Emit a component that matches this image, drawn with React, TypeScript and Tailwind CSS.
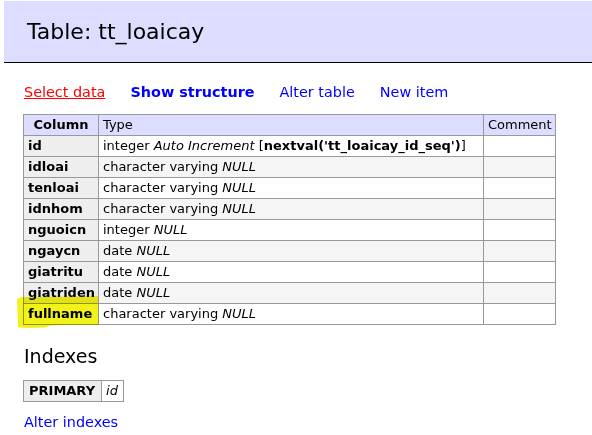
import React from "react";

type Row = { name: string; type: React.ReactNode };

const rows: Row[] = [
  {
    name: "id",
    type: (
      <>
        integer <i>Auto Increment</i> [<b>nextval('tt_loaicay_id_seq')</b>]
      </>
    ),
  },
  { name: "idloai", type: <>character varying <i>NULL</i></> },
  { name: "tenloai", type: <>character varying <i>NULL</i></> },
  { name: "idnhom", type: <>character varying <i>NULL</i></> },
  { name: "nguoicn", type: <>integer <i>NULL</i></> },
  { name: "ngaycn", type: <>date <i>NULL</i></> },
  { name: "giatritu", type: <>date <i>NULL</i></> },
  { name: "giatriden", type: <>date <i>NULL</i></> },
  { name: "fullname", type: <>character varying <i>NULL</i></> },
];

export default function App() {
  return (
    <div className="relative w-[592px] h-[435px] overflow-hidden bg-white text-black font-['DejaVu_Sans',Verdana,sans-serif] text-[13px] leading-[16px]">
      <h2 className="ml-[4px] mt-[1px] h-[62px] border-b border-black bg-[#ddf] pl-[23px] pt-[18px] text-[22px] leading-[26px] font-normal">
        Table: tt_loaicay
      </h2>

      <div className="ml-[24px] mt-[20px] flex gap-[25px] text-[14.4px] leading-[18px]">
        <a className="text-[#f00] underline cursor-pointer">Select data</a>
        <a className="text-[#00f] font-bold cursor-pointer">Show structure</a>
        <a className="text-[#00f] cursor-pointer">Alter table</a>
        <a className="text-[#00f] cursor-pointer">New item</a>
      </div>

      <table className="ml-[23px] mt-[13px] w-[532px] table-fixed border-collapse border border-[#999]">
        <colgroup>
          <col className="w-[75px]" />
          <col className="w-[385px]" />
          <col className="w-[72px]" />
        </colgroup>
        <thead>
          <tr className="bg-[#ddf]">
            <th className="border border-[#999] px-[4px] py-[2px] text-center font-bold">Column</th>
            <td className="border border-[#999] px-[4px] py-[2px] text-left">Type</td>
            <td className="border border-[#999] px-[4px] py-[2px] text-left">Comment</td>
          </tr>
        </thead>
        <tbody>
          {rows.map((r, i) => (
            <tr key={r.name}>
              <th
                className={`border border-[#999] px-[4px] py-[2px] text-left font-bold whitespace-nowrap ${
                  r.name === "fullname" ? "bg-white" : "bg-[#eee]"
                }`}
              >
                {r.name}
              </th>
              <td className={`border border-[#999] px-[4px] py-[2px] whitespace-nowrap ${i % 2 === 1 ? "bg-[#f5f5f5]" : "bg-white"}`}>
                {r.type}
              </td>
              <td className={`border border-[#999] px-[4px] py-[2px] ${i % 2 === 1 ? "bg-[#f5f5f5]" : "bg-white"}`}></td>
            </tr>
          ))}
        </tbody>
      </table>

      <h3 className="ml-[24px] mt-[20px] text-[19px] leading-[23px] font-normal">Indexes</h3>

      <table className="ml-[23px] mt-[12px] border-collapse border border-[#999]">
        <tbody>
          <tr>
            <th className="border border-[#999] bg-[#eee] pl-[5px] pr-[6px] py-[2px] text-left font-bold">PRIMARY</th>
            <td className="border border-[#999] bg-white pl-[4px] pr-[5px] py-[2px]">
              <i>id</i>
            </td>
          </tr>
        </tbody>
      </table>

      <div className="ml-[24px] mt-[11px] text-[14.4px] leading-[18px]">
        <a className="text-[#00f] cursor-pointer">Alter indexes</a>
      </div>

      <svg
        className="pointer-events-none absolute left-0 top-0 mix-blend-multiply"
        width={592}
        height={435}
        viewBox="0 0 592 435"
      >
        <polygon
          points="17,299 22,297 40,297 70,296.5 98,296 98.5,325 70,325 50,325.5 45,327.5 30,328 18,327.5"
          fill="#f0f21a"
        />
      </svg>
    </div>
  );
}
